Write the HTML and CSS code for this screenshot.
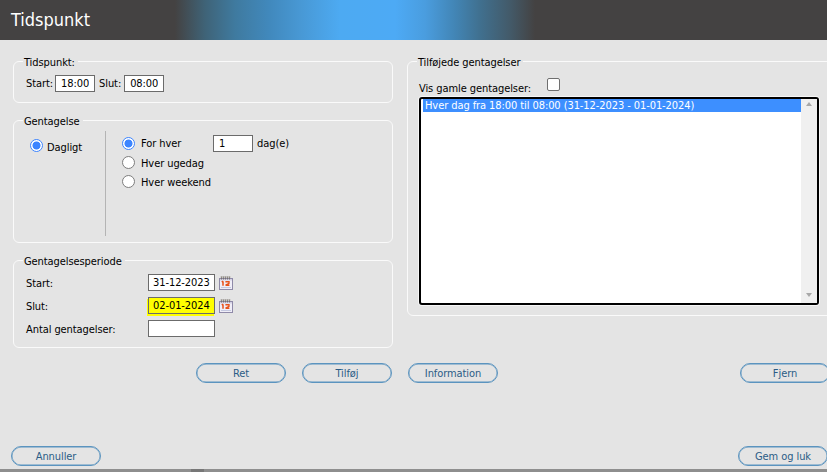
FILE: index.html
```html
<!DOCTYPE html>
<html lang="da">
<head>
<meta charset="utf-8">
<title>Tidspunkt</title>
<link rel="stylesheet" href="styles.css">
</head>
<body>
<div class="page">
  <header class="titlebar"><h1>Tidspunkt</h1></header>
  <main class="columns">
    <div class="left">
      <fieldset class="group g-time">
        <legend>Tidspunkt:</legend>
        <div class="time-row">
          <label>Start:</label><input class="field f40" value="18:00">
          <label class="slut">Slut:</label><input class="field f40" value="08:00">
        </div>
      </fieldset>
      <fieldset class="group g-repeat">
        <legend>Gentagelse</legend>
        <div class="repeat">
          <div class="freq">
            <label class="radio-row"><input type="radio" name="freq" checked><span>Dagligt</span></label>
          </div>
          <div class="options">
            <div class="radio-row opt first">
              <input type="radio" name="opt" checked><span class="opt-label">For hver</span>
              <input class="field f40" value="1"><span class="unit">dag(e)</span>
            </div>
            <label class="radio-row opt"><input type="radio" name="opt"><span class="opt-label">Hver ugedag</span></label>
            <label class="radio-row opt"><input type="radio" name="opt"><span class="opt-label">Hver weekend</span></label>
          </div>
        </div>
      </fieldset>
      <fieldset class="group g-period">
        <legend>Gentagelsesperiode</legend>
        <div class="period">
          <label>Start:</label>
          <div class="date"><input class="field f67" value="31-12-2023">
            <svg class="cal" viewBox="0 0 14 14" width="14" height="14"><use href="#cal"/></svg></div>
          <label>Slut:</label>
          <div class="date"><input class="field f67 marked" value="02-01-2024">
            <svg class="cal" viewBox="0 0 14 14" width="14" height="14"><use href="#cal"/></svg></div>
          <label>Antal gentagelser:</label>
          <div class="date"><input class="field f67" value=""></div>
        </div>
      </fieldset>
    </div>
    <fieldset class="group g-list">
      <legend>Tilføjede gentagelser</legend>
      <div class="old"><span>Vis gamle gentagelser:</span><input type="checkbox" class="check"></div>
      <div class="listbox">
        <div class="items"><div class="item selected">Hver dag fra 18:00 til 08:00 (31-12-2023 - 01-01-2024)</div></div>
        <div class="scroll"><span class="up"></span><span class="down"></span></div>
      </div>
    </fieldset>
  </main>
  <div class="actions">
    <button class="btn">Ret</button>
    <button class="btn">Tilføj</button>
    <button class="btn">Information</button>
    <button class="btn fjern">Fjern</button>
  </div>
  <footer class="footer">
    <button class="btn">Annuller</button>
    <button class="btn">Gem og luk</button>
  </footer>
  <div class="hscroll"><span class="thumb"></span></div>
</div>
<svg class="defs" width="0" height="0" aria-hidden="true">
  <symbol id="cal" viewBox="0 0 14 14">
    <rect x="0.5" y="2.5" width="13" height="11" fill="#f0eef8" stroke="#8f8aa8"/>
    <rect x="1" y="3" width="12" height="1.5" fill="#d4d1e4"/>
    <path d="M2.5 0.5v3M4.5 0.5v3M6.5 0.5v3M8.5 0.5v3M10.5 0.5v3" stroke="#77736f" fill="none"/>
    <path d="M1.5 1h10" stroke="#a9a5a0" fill="none"/>
    <path d="M4 5.2v4.6M2.8 6.2l1.2-1" stroke="#e8521a" stroke-width="1.5" fill="none"/>
    <path d="M6.4 5.8h3.6v1.6L6.6 9.2h3.8" stroke="#e8521a" stroke-width="1.4" fill="none"/>
    <path d="M2 11.5h10" stroke="#c4c8e0" fill="none"/>
  </symbol>
</svg>
</body>
</html>
```
FILE: styles.css
```css
* { box-sizing: border-box; }
html, body { margin: 0; height: 100%; overflow: hidden; }
body {
  background: #e4e4e4;
  color: #000;
  font: 11px/15px "DejaVu Sans", sans-serif;
  font-stretch: condensed;
  letter-spacing: -0.08px;
}
.page { display: flex; flex-direction: column; width: 827px; height: 472px; overflow: hidden; }
.defs { display: block; height: 0; }

.titlebar {
  flex: none;
  height: 40px;
  padding-left: 11px;
  background: linear-gradient(90deg, #444242 0, #444242 175px, #3f6377 205px, #3f7a9f 235px, #4189bd 270px, #4898d4 300px, #4daaf2 340px, #4daaf5 395px, #4a9ddf 425px, #4285b5 455px, #40708f 480px, #435a69 510px, #444242 535px, #444242 100%);
  display: flex;
  align-items: center;
}
.titlebar h1 { margin: 0; font-size: 18px; font-weight: 400; line-height: 40px; color: #fff; letter-spacing: 0; }

.columns { flex: none; display: flex; padding: 14px 0 0 13px; gap: 14px; }
.left { flex: none; width: 380px; display: flex; flex-direction: column; gap: 10px; }

.group {
  margin: 0;
  min-width: 0;
  padding: 0 12px;
  border: 1px solid #fafafa;
  border-radius: 6px;
}
.group legend { margin-left: -3px; padding: 1px 3px 0 1px; height: 15px; line-height: 15px; }

.g-time { height: 49px; }
.g-repeat { height: 130px; }
.g-period { height: 95px; }
.g-list { flex: none; width: 440px; height: 262px; padding-left: 11px; }
.g-list legend { margin-left: -2px; }

.time-row { display: flex; align-items: center; padding-top: 6px; height: 23px; }
.time-row label { margin-right: 2px; }
.time-row .slut { margin-left: 4px; margin-right: 3px; }

.field {
  display: block;
  height: 17px;
  padding: 0 4px;
  border: 1px solid #6b6b6b;
  border-radius: 0;
  background: #fff;
  color: #000;
  font: inherit;
  letter-spacing: inherit;
  outline: none;
}
.f40 { width: 40px; padding: 0 5px; }
.f67 { width: 67px; }
.marked { background: #ffff00; box-shadow: -1px 2px 0 #ffff00; }

input[type="radio"] {
  appearance: none;
  flex: none;
  width: 13px;
  height: 13px;
  margin: 0;
  border: 1px solid #7d7d7d;
  border-radius: 50%;
  background: #fff;
}
input[type="radio"]:checked {
  border-color: #3d85ff;
  background: radial-gradient(circle, #3d85ff 0, #3d85ff 3.6px, #fff 4.4px);
}

.repeat { display: flex; height: 108px; padding-top: 3px; }
.freq { flex: none; width: 80px; padding: 5px 0 0 4px; border-right: 1px solid #b4b4b4; }
.radio-row { display: flex; align-items: center; }
.radio-row > span { margin-left: 4px; padding-top: 1px; }
.freq span { padding-top: 4px; }
.options { padding: 0 0 0 16px; }
.opt { height: 19px; }
.opt.first { height: 19px; margin-top: 3px; }
.opt .opt-label { margin-left: 6px; }
.opt.first .opt-label { width: 72px; flex: none; padding-top: 0; }
.opt .unit { margin-left: 4px; padding-top: 0; }

.period {
  display: grid;
  grid-template-columns: 122px auto;
  grid-auto-rows: 17px;
  row-gap: 6px;
  align-items: center;
  padding-top: 6px;
}
.period label { padding-top: 1px; }
.date { display: flex; align-items: center; gap: 4px; }
.cal { flex: none; }

.old { display: flex; height: 27px; align-items: flex-end; position: relative; }
.check {
  appearance: none;
  position: absolute;
  left: 128px;
  top: 9px;
  width: 13px;
  height: 13px;
  margin: 0;
  border: 1px solid #6f6f6f;
  border-radius: 2px;
  background: #fff;
}
.listbox {
  display: flex;
  width: 400px;
  height: 208px;
  margin-top: 1px;
  border: 2px solid #000;
  border-radius: 3px;
  background: #fff;
  box-shadow: 0 0 0 1px #f6f6f6;
}
.items { flex: 1; padding-left: 2px; }
.item { height: 13px; padding-left: 2px; line-height: 13px; }
.selected { background: #3d8fff; color: #fff; }
.scroll { flex: none; width: 16px; position: relative; background: #f0f0f0; }
.up, .down { position: absolute; left: 5px; width: 0; height: 0; border: 4px solid transparent; border-left-width: 3.5px; border-right-width: 3.5px; }
.up { top: 3px; border-top: 0; border-bottom-color: #a8a8a8; }
.down { bottom: 6px; border-bottom: 0; border-top-color: #a8a8a8; }

.btn {
  flex: none;
  width: 90px;
  height: 20px;
  padding: 0;
  border: 1px solid #5b94bf;
  border-radius: 10px;
  background: #e4e4e4;
  box-shadow: inset 0 0 0 0.4px #5b94bf;
  color: #2b5c86;
  font: inherit;
  letter-spacing: inherit;
  line-height: 17px;
}
.actions { flex: none; display: flex; gap: 16px; padding-left: 196px; margin-top: 15px; }
.fjern { margin-left: 226px; }
.footer { flex: none; display: flex; justify-content: space-between; padding-left: 11px; width: 828px; margin-top: auto; margin-bottom: 3px; }
.hscroll { flex: none; height: 3px; background: #8e8e8e; position: relative; }
.thumb { position: absolute; left: 191px; top: 0; width: 13px; height: 3px; background: #777; }
```
